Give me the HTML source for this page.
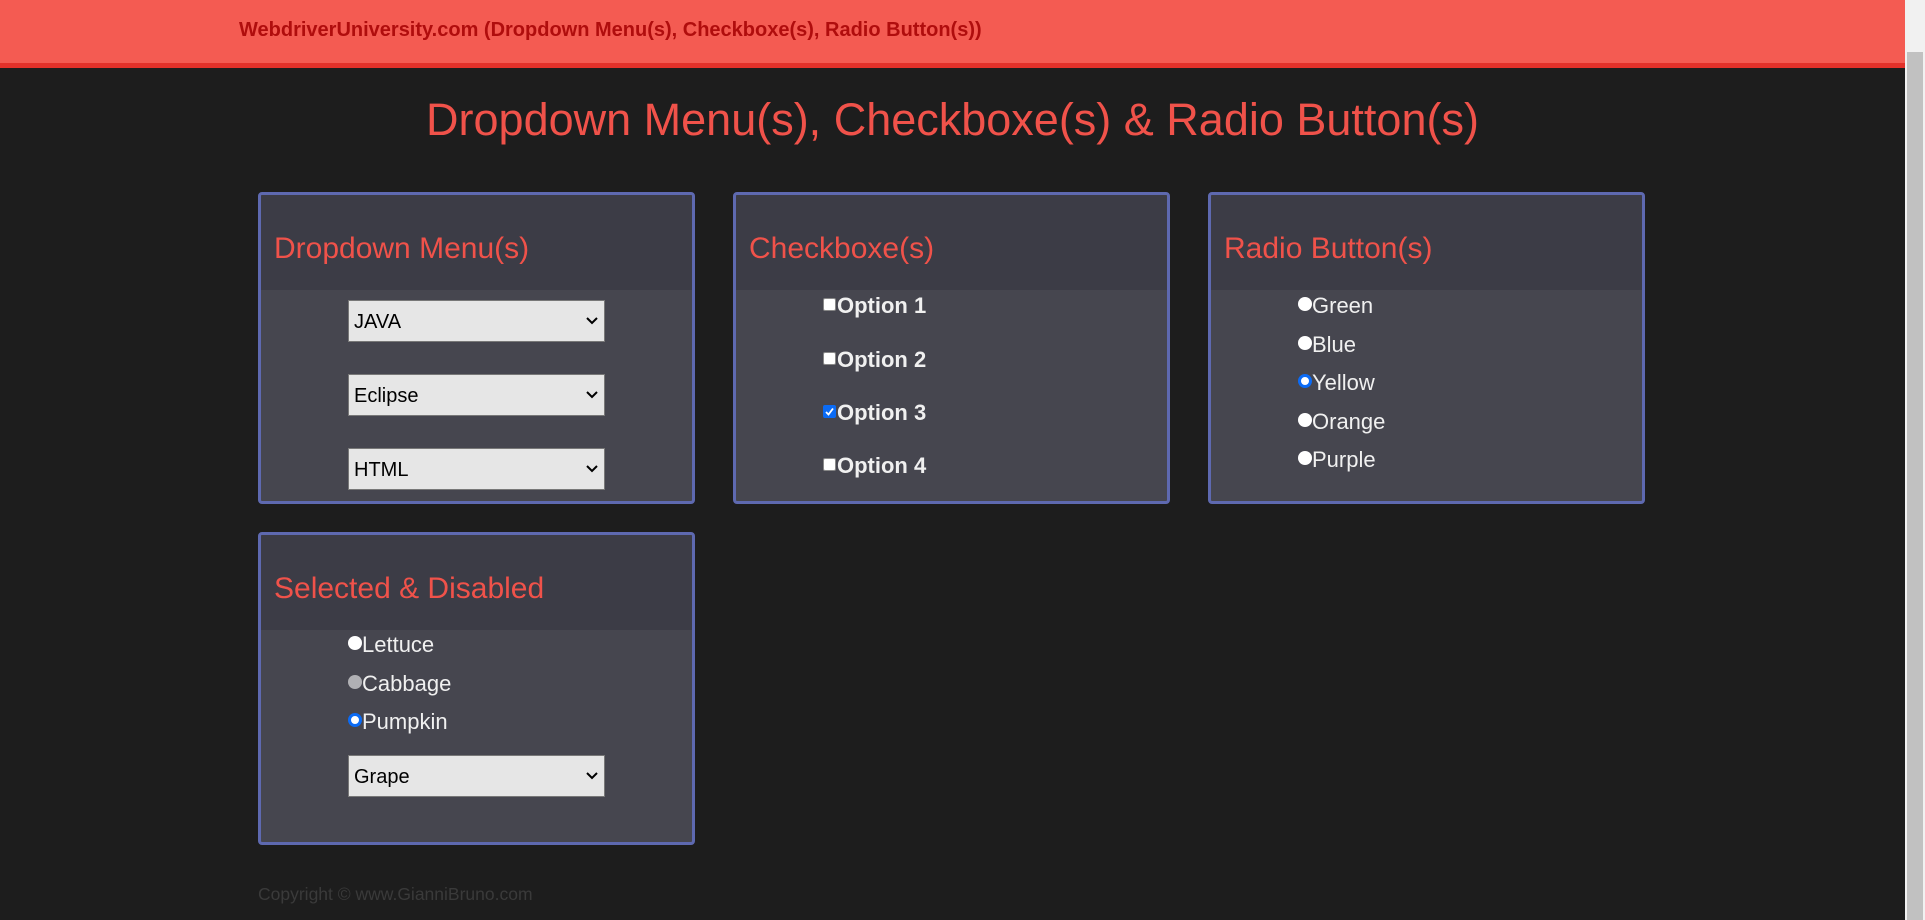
<!DOCTYPE html>
<html><head><style>
*{margin:0;padding:0;box-sizing:border-box}
html,body{width:1925px;height:920px;overflow:hidden;background:#1d1d1d;font-family:"Liberation Sans",Arial,sans-serif}
.abs{position:absolute}
#top{left:0;top:0;width:1905px;height:68px;background:#f45b52;border-bottom:5px solid #e3312a}
#top span{position:absolute;left:239px;top:19px;font-size:20px;font-weight:bold;color:#b00d0d;white-space:nowrap}
h1{position:absolute;left:0;width:1905px;top:94px;text-align:center;font-weight:normal;font-size:45px;color:#f0524a;white-space:nowrap}
.panel{position:absolute;width:437px;border:3px solid #5e69b0;border-radius:4px;background:#46464f;overflow:hidden}
.panel .hd{background:#3c3c46;height:95px;position:relative}
.panel .hd div{position:absolute;left:13px;top:37px;font-size:30px;color:#f0524a;white-space:nowrap}
.sel{position:absolute;width:257px;height:42px;background:#e6e6e6;border:1px solid #787878;font-size:20px;color:#000;padding:10px 0 0 5px}
.sel svg{position:absolute;right:6px;top:16px}
.cb{position:absolute;font-size:22px;font-weight:bold;color:#f0f0f0;white-space:nowrap}
.cb i{display:inline-block;width:13px;height:13px;background:#fff;border:1px solid #888;border-radius:2px;vertical-align:2px;margin-right:1px}
.rb{position:absolute;font-size:22px;color:#f0f0f0;white-space:nowrap}
.rb i{display:inline-block;width:14px;height:14px;border-radius:50%;background:#fff;vertical-align:2px}
#sb{left:1905px;top:0;width:20px;height:920px;background:#f1f1f1}
#th{left:1907px;top:52px;width:16px;height:868px;background:#c1c1c1}
</style></head><body>
<div id="top" class="abs"><span>WebdriverUniversity.com (Dropdown Menu(s), Checkboxe(s), Radio Button(s))</span></div>
<h1>Dropdown Menu(s), Checkboxe(s) &amp; Radio Button(s)</h1>

<div class="panel" style="left:258px;top:192px;height:312px"><div class="hd"><div>Dropdown Menu(s)</div></div></div>
<div class="panel" style="left:733px;top:192px;height:312px"><div class="hd"><div>Checkboxe(s)</div></div></div>
<div class="panel" style="left:1208px;top:192px;height:312px"><div class="hd"><div>Radio Button(s)</div></div></div>
<div class="panel" style="left:258px;top:532px;height:313px"><div class="hd"><div>Selected &amp; Disabled</div></div></div>

<div class="sel" style="left:348px;top:300px">JAVA<svg width="12" height="8"><path d="M1 1l5 5 5-5" stroke="#000" stroke-width="2" fill="none"/></svg></div>
<div class="sel" style="left:348px;top:374px">Eclipse<svg width="12" height="8"><path d="M1 1l5 5 5-5" stroke="#000" stroke-width="2" fill="none"/></svg></div>
<div class="sel" style="left:348px;top:448px">HTML<svg width="12" height="8"><path d="M1 1l5 5 5-5" stroke="#000" stroke-width="2" fill="none"/></svg></div>
<div class="sel" style="left:348px;top:755px">Grape<svg width="12" height="8"><path d="M1 1l5 5 5-5" stroke="#000" stroke-width="2" fill="none"/></svg></div>

<div class="cb" style="left:823px;top:293px"><i></i>Option 1</div>
<div class="cb" style="left:823px;top:347px"><i></i>Option 2</div>
<div class="cb" style="left:823px;top:400px"><i style="background:#0b6bf5;border-color:#0b6bf5;position:relative"><svg width="13" height="13" style="position:absolute;left:-1px;top:-1px"><path d="M3 7l2.5 2.5L10 3.5" stroke="#fff" stroke-width="1.8" fill="none"/></svg></i>Option 3</div>
<div class="cb" style="left:823px;top:453px"><i></i>Option 4</div>

<div class="rb" style="left:1298px;top:293px"><i></i>Green</div>
<div class="rb" style="left:1298px;top:332px"><i></i>Blue</div>
<div class="rb" style="left:1298px;top:370px"><i style="background:#fff;border:3px solid #0b6bf5"></i>Yellow</div>
<div class="rb" style="left:1298px;top:409px"><i></i>Orange</div>
<div class="rb" style="left:1298px;top:447px"><i></i>Purple</div>

<div class="rb" style="left:348px;top:632px"><i></i>Lettuce</div>
<div class="rb" style="left:348px;top:671px"><i style="background:#b0b0b4"></i>Cabbage</div>
<div class="rb" style="left:348px;top:709px"><i style="background:#fff;border:3px solid #0b6bf5"></i>Pumpkin</div>

<div class="abs" style="left:258px;top:884px;font-size:17.5px;color:#3a3a3a;white-space:nowrap">Copyright © www.GianniBruno.com</div>
<div id="sb" class="abs"></div><div id="th" class="abs"></div>
</body></html>
